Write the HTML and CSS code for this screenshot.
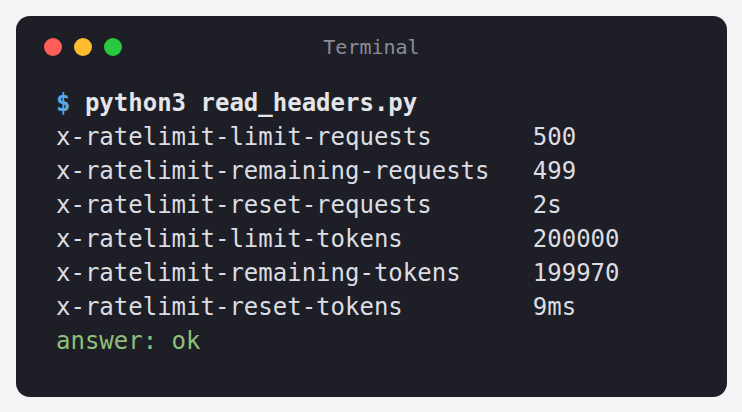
FILE: index.html
```html
<!DOCTYPE html>
<html lang="en">
<head>
<meta charset="utf-8">
<title>Terminal</title>
<link rel="stylesheet" href="styles.css">
</head>
<body>
<div class="terminal">
  <div class="titlebar">
    <div class="dots">
      <span class="dot red"></span>
      <span class="dot yellow"></span>
      <span class="dot green"></span>
    </div>
    <div class="title">Terminal</div>
  </div>
<pre class="screen"><span class="prompt">$</span> <span class="cmd">python3 read_headers.py</span>
x-ratelimit-limit-requests       500
x-ratelimit-remaining-requests   499
x-ratelimit-reset-requests       2s
x-ratelimit-limit-tokens         200000
x-ratelimit-remaining-tokens     199970
x-ratelimit-reset-tokens         9ms
<span class="ok">answer: ok</span></pre>
</div>
</body>
</html>
```
FILE: styles.css
```css
html, body {
  margin: 0;
  padding: 0;
  background: #f3f4f6;
}
body {
  padding: 16px 15px 15px 16px;
}
.terminal {
  width: 711px;
  height: 381px;
  box-sizing: border-box;
  background: #1e1f26;
  border-radius: 14px;
  font-family: "DejaVu Sans Mono", monospace;
}
.titlebar {
  position: relative;
  height: 62px;
  display: flex;
  align-items: center;
  justify-content: center;
}
.dots {
  position: absolute;
  left: 28px;
  top: 22px;
  display: flex;
  gap: 12px;
}
.dot {
  width: 18px;
  height: 18px;
  border-radius: 50%;
  display: block;
}
.red { background: #ff5f57; }
.yellow { background: #febc2e; }
.green { background: #28c840; }
.title {
  color: #8a8c96;
  font-size: 20px;
  line-height: 24px;
}
.screen {
  margin: 0;
  padding: 8px 40px 0 40px;
  font-family: "DejaVu Sans Mono", monospace;
  font-size: 24px;
  line-height: 34px;
  color: #dcdde2;
  white-space: pre;
}
.prompt { color: #5aa9e6; font-weight: bold; }
.cmd { color: #e4e5ea; font-weight: bold; }
.ok { color: #8fbf7a; }
```
